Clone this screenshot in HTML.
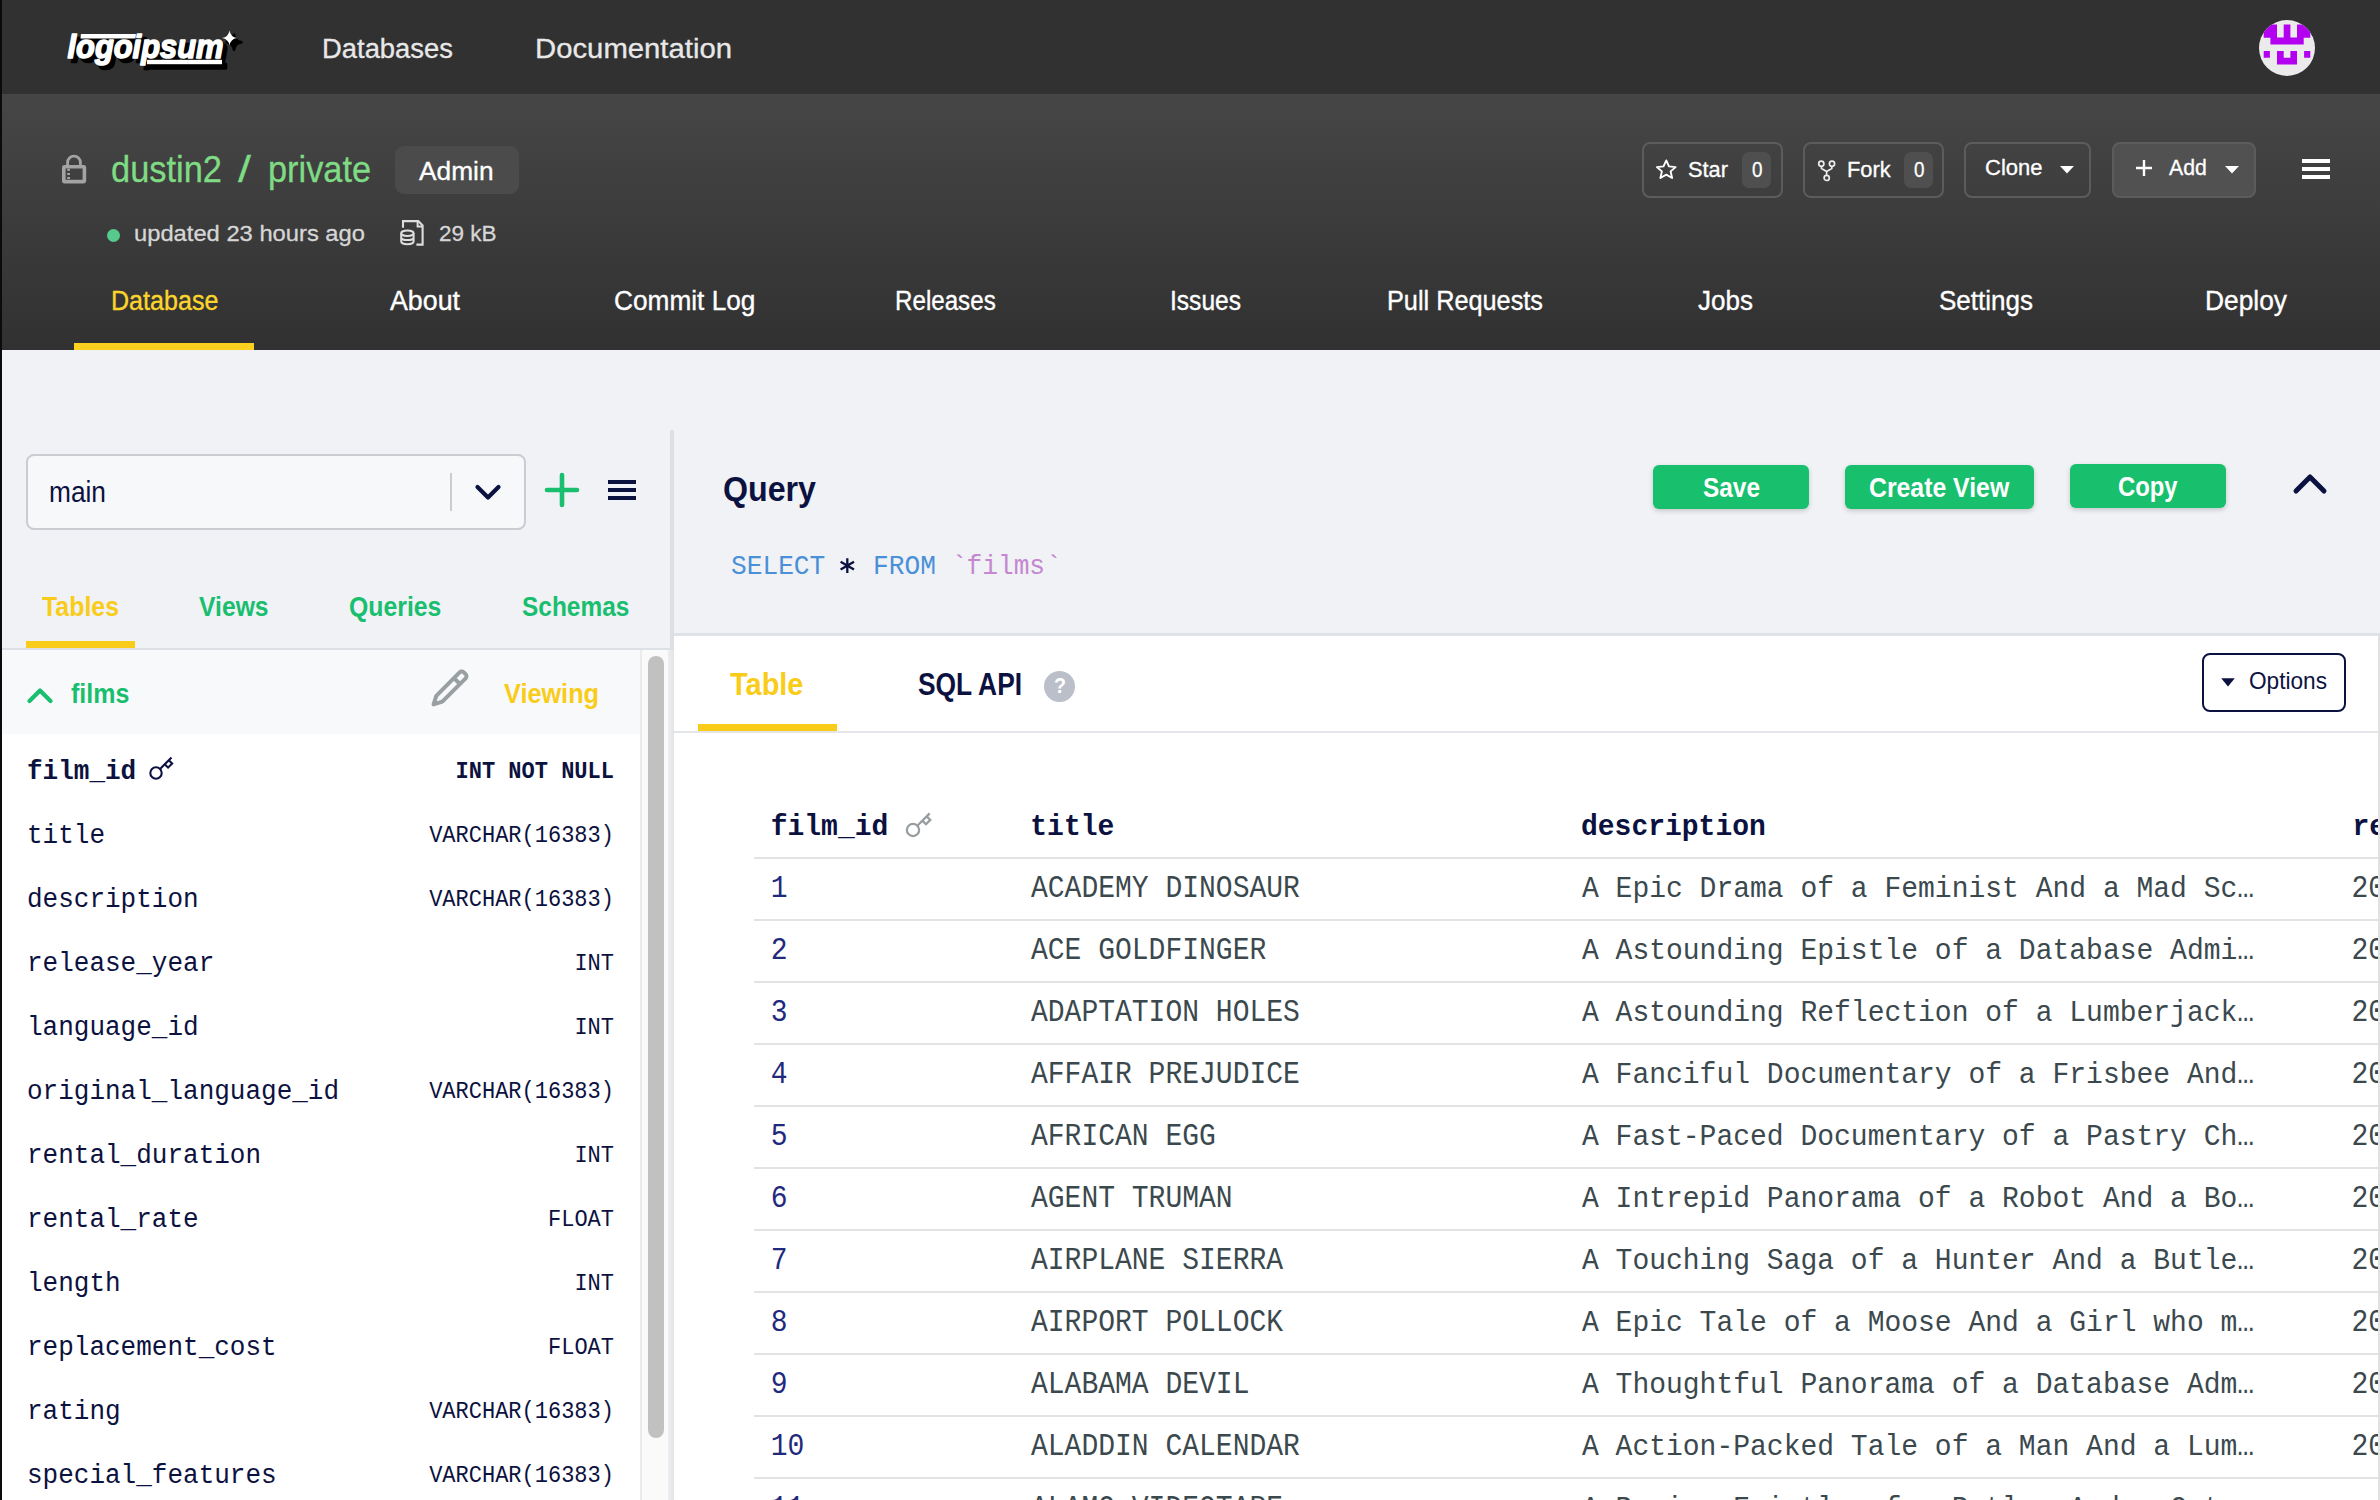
<!DOCTYPE html>
<html><head><meta charset="utf-8"><style>
html,body{margin:0;padding:0}
body{width:2380px;height:1500px;overflow:hidden;position:relative;background:#f0f2f5;font-family:"Liberation Sans",sans-serif}
.r{position:absolute}
.t{position:absolute;white-space:nowrap;line-height:1;transform-origin:0 0}
</style></head><body>
<div class="r" style="left:0px;top:0px;width:2380px;height:94px;background:#313131"></div>
<div class="r" style="left:0px;top:94px;width:2380px;height:256px;background:linear-gradient(#464646,#313131)"></div>
<div class="r" style="left:0px;top:350px;width:2380px;height:1150px;background:#f0f2f5"></div>
<svg class="r" style="left:60px;top:24px" width="190" height="50" viewBox="0 0 190 50">
<g font-family="Liberation Sans" font-weight="700" font-style="italic" font-size="33">
<g transform="translate(4,4.2)" fill="#000" stroke="#000" stroke-width="2.6" stroke-linejoin="round">
<text x="7.5" y="34" textLength="156" lengthAdjust="spacingAndGlyphs">logoipsum</text>
<rect x="22" y="10" width="55" height="4.4" transform="skewX(-6)"/>
<rect x="87" y="35.8" width="75" height="4.4"/>
<path d="M170 6.5 Q171 13 177.5 14 Q171 15 170 21.5 Q169 15 162.5 14 Q169 13 170 6.5Z"/>
</g>
<g fill="#fff" stroke="#fff" stroke-width="1.5" stroke-linejoin="round">
<text x="7.5" y="34" textLength="156" lengthAdjust="spacingAndGlyphs">logoipsum</text>
<rect x="22" y="10" width="55" height="4.4" transform="skewX(-6)" stroke="none"/>
<rect x="87" y="35.8" width="75" height="4.4" stroke="none"/>
<path d="M169.5 6.5 Q170.5 13 177 14 Q170.5 15 169.5 21.5 Q168.5 15 162 14 Q168.5 13 169.5 6.5Z" stroke="none"/>
</g>
</g></svg>
<div class="t" style="left:322.00px;top:36.14px;font-size:27px;font-family:'Liberation Sans', sans-serif;font-weight:400;color:#e8e8e8;transform:scale(1.0147,1.0000);-webkit-text-stroke:0.3px #e8e8e8">Databases</div>
<div class="t" style="left:535.00px;top:36.14px;font-size:27px;font-family:'Liberation Sans', sans-serif;font-weight:400;color:#e8e8e8;transform:scale(1.0848,1.0000);-webkit-text-stroke:0.3px #e8e8e8">Documentation</div>
<svg class="r" style="left:2259px;top:20px" width="56" height="56" viewBox="0 0 56 56">
<defs><clipPath id="cc"><circle cx="28" cy="28" r="28"/></clipPath></defs>
<circle cx="28" cy="28" r="28" fill="#ebebeb"/>
<g clip-path="url(#cc)" fill="#b400f0"><path d="M4.7 4.4 H18 V17.7 H4.7Z M24.7 4.4 H31.4 V17.7 H24.7Z M38 4.4 H51.3 V17.7 H38Z M11.4 17.6 H44.7 V24.4 H11.4Z M4.7 31 H10.9 V37.7 H4.7Z M45.1 31 H51.3 V37.7 H45.1Z M18 31 H24.7 V37.8 H31.4 V31 H38 V44.4 H18Z"/>
</g></svg>
<svg class="r" style="left:61px;top:154px" width="27" height="31" viewBox="0 0 27 31">
<path d="M6.6 12 V8.6 A6.4 6.4 0 0 1 19.4 8.6 V12" fill="none" stroke="#a3a3a3" stroke-width="2.8"/>
<rect x="2.8" y="12.8" width="20.6" height="14.8" rx="0.6" fill="none" stroke="#a3a3a3" stroke-width="3.6"/>
<rect x="6.2" y="14.8" width="2.8" height="2" fill="#a3a3a3"/><rect x="6.2" y="19" width="2.8" height="2" fill="#a3a3a3"/><rect x="6.2" y="23" width="2.8" height="2" fill="#a3a3a3"/>
</svg>
<div class="t" style="left:110.50px;top:151.52px;font-size:36px;font-family:'Liberation Sans', sans-serif;font-weight:400;color:#7fdb84;transform:scale(0.9561,1.0000);-webkit-text-stroke:0.3px #7fdb84">dustin2</div>
<div class="t" style="left:237.60px;top:152.12px;font-size:36px;font-family:'Liberation Sans', sans-serif;font-weight:400;color:#7fdb84;transform:scale(1.2935,1.0000);-webkit-text-stroke:0.3px #7fdb84">/</div>
<div class="t" style="left:267.80px;top:151.52px;font-size:36px;font-family:'Liberation Sans', sans-serif;font-weight:400;color:#7fdb84;transform:scale(0.9533,1.0000);-webkit-text-stroke:0.3px #7fdb84">private</div>
<div class="r" style="left:395px;top:146px;width:124px;height:48px;background:#4b4b4b;border-radius:9px"></div>
<div class="t" style="left:419.00px;top:159.03px;font-size:25px;font-family:'Liberation Sans', sans-serif;font-weight:400;color:#ffffff;transform:scale(1.0515,1.0000);-webkit-text-stroke:0.3px #ffffff">Admin</div>
<div class="r" style="left:106.5px;top:228.5px;width:13px;height:13px;background:#56c98d;border-radius:50%"></div>
<div class="t" style="left:133.70px;top:222.86px;font-size:22.6px;font-family:'Liberation Sans', sans-serif;font-weight:400;color:#d6d6d6;transform:scale(1.0505,1.0000);-webkit-text-stroke:0.3px #d6d6d6">updated 23 hours ago</div>
<svg class="r" style="left:399px;top:219px" width="27" height="29" viewBox="0 0 27 29">
<path d="M4 8.7 V2.1 H19.3 L23.6 6.4 V25.6 H17.4" fill="none" stroke="#dedede" stroke-width="2.1"/>
<path d="M18.6 2.1 V7.4 H23.6" fill="none" stroke="#dedede" stroke-width="2"/>
<ellipse cx="8.4" cy="14.2" rx="6.2" ry="2.7" fill="none" stroke="#dedede" stroke-width="2"/>
<path d="M2.2 14.2 V22.6 A6.2 2.7 0 0 0 14.6 22.6 V14.2 M2.2 18.4 A6.2 2.7 0 0 0 14.6 18.4" fill="none" stroke="#dedede" stroke-width="2"/>
</svg>
<div class="t" style="left:439.00px;top:222.86px;font-size:22.6px;font-family:'Liberation Sans', sans-serif;font-weight:400;color:#d6d6d6;transform:scale(0.9965,1.0000);-webkit-text-stroke:0.3px #d6d6d6">29 kB</div>
<div class="r" style="left:1642px;top:142px;width:141px;height:56px;box-sizing:border-box;border:2px solid #5c5c5c;border-radius:8px;background:transparent"></div>
<svg class="r" style="left:1654px;top:158px" width="24" height="23" viewBox="0 0 24 23">
<path d="M12.3 2.4 L15 8.4 L21.6 9.1 L16.6 13.4 L18.1 20 L12.3 16.6 L6.4 20 L7.9 13.4 L2.9 9.1 L9.5 8.4 Z" fill="none" stroke="#fff" stroke-width="1.9" stroke-linejoin="round"/>
</svg>
<div class="t" style="left:1688.00px;top:159.17px;font-size:22px;font-family:'Liberation Sans', sans-serif;font-weight:400;color:#ffffff;transform:scale(0.9913,1.0000);-webkit-text-stroke:0.3px #ffffff">Star</div>
<div class="r" style="left:1742px;top:152px;width:29px;height:36px;background:#4f4f4f;border-radius:7px"></div>
<div class="t" style="left:1751.50px;top:159.17px;font-size:22px;font-family:'Liberation Sans', sans-serif;font-weight:400;color:#ffffff;transform:scale(0.8571,1.0000);-webkit-text-stroke:0.3px #ffffff">0</div>
<div class="r" style="left:1803px;top:142px;width:141px;height:56px;box-sizing:border-box;border:2px solid #5c5c5c;border-radius:8px;background:transparent"></div>
<svg class="r" style="left:1816px;top:158px" width="22" height="25" viewBox="0 0 22 25">
<circle cx="5.3" cy="5.7" r="2.6" fill="none" stroke="#ececec" stroke-width="1.7"/>
<circle cx="16" cy="5.7" r="2.6" fill="none" stroke="#ececec" stroke-width="1.7"/>
<circle cx="10.7" cy="19.9" r="2.6" fill="none" stroke="#ececec" stroke-width="1.7"/>
<path d="M5.5 8.3 V10.6 L10.6 13.5 L15.8 10.6 V8.3 M10.6 13.5 V17.3" fill="none" stroke="#ececec" stroke-width="1.7" stroke-linejoin="round"/>
</svg>
<div class="t" style="left:1847.00px;top:159.17px;font-size:22px;font-family:'Liberation Sans', sans-serif;font-weight:400;color:#ffffff;transform:scale(0.9921,1.0000);-webkit-text-stroke:0.3px #ffffff">Fork</div>
<div class="r" style="left:1904px;top:152px;width:29px;height:36px;background:#4f4f4f;border-radius:7px"></div>
<div class="t" style="left:1913.50px;top:159.17px;font-size:22px;font-family:'Liberation Sans', sans-serif;font-weight:400;color:#ffffff;transform:scale(0.8571,1.0000);-webkit-text-stroke:0.3px #ffffff">0</div>
<div class="r" style="left:1964px;top:142px;width:127px;height:56px;box-sizing:border-box;border:2px solid #5c5c5c;border-radius:8px;background:transparent"></div>
<div class="t" style="left:1985.00px;top:157.07px;font-size:22px;font-family:'Liberation Sans', sans-serif;font-weight:400;color:#ffffff;-webkit-text-stroke:0.3px #ffffff">Clone</div>
<svg class="r" style="left:2059px;top:165px" width="16" height="9" viewBox="0 0 16 9"><path d="M1 1 H15 L8 8.5Z" fill="#fff"/></svg>
<div class="r" style="left:2112px;top:142px;width:144px;height:56px;box-sizing:border-box;border:2px solid #5c5c5c;border-radius:8px;background:#515151"></div>
<svg class="r" style="left:2135px;top:159px" width="18" height="18" viewBox="0 0 18 18"><path d="M9 1 V17 M1 9 H17" stroke="#fff" stroke-width="2.4"/></svg>
<div class="t" style="left:2168.50px;top:157.07px;font-size:22px;font-family:'Liberation Sans', sans-serif;font-weight:400;color:#ffffff;transform:scale(0.9655,1.0000);-webkit-text-stroke:0.3px #ffffff">Add</div>
<svg class="r" style="left:2224px;top:165px" width="16" height="9" viewBox="0 0 16 9"><path d="M1 1 H15 L8 8.5Z" fill="#fff"/></svg>
<div class="r" style="left:2302px;top:159px;width:28px;height:4px;background:#fff"></div>
<div class="r" style="left:2302px;top:167px;width:28px;height:4px;background:#fff"></div>
<div class="r" style="left:2302px;top:175px;width:28px;height:4px;background:#fff"></div>
<div class="t" style="left:110.60px;top:287.64px;font-size:27px;font-family:'Liberation Sans', sans-serif;font-weight:400;color:#fcd52c;transform:scale(0.9291,1.0000);-webkit-text-stroke:0.35px #fcd52c">Database</div>
<div class="t" style="left:389.50px;top:287.64px;font-size:27px;font-family:'Liberation Sans', sans-serif;font-weight:400;color:#ffffff;transform:scale(0.9922,1.0000);-webkit-text-stroke:0.35px #ffffff">About</div>
<div class="t" style="left:614.00px;top:287.64px;font-size:27px;font-family:'Liberation Sans', sans-serif;font-weight:400;color:#ffffff;transform:scale(0.9715,1.0000);-webkit-text-stroke:0.35px #ffffff">Commit Log</div>
<div class="t" style="left:894.55px;top:287.64px;font-size:27px;font-family:'Liberation Sans', sans-serif;font-weight:400;color:#ffffff;transform:scale(0.8947,1.0000);-webkit-text-stroke:0.35px #ffffff">Releases</div>
<div class="t" style="left:1169.60px;top:287.64px;font-size:27px;font-family:'Liberation Sans', sans-serif;font-weight:400;color:#ffffff;transform:scale(0.9097,1.0000);-webkit-text-stroke:0.35px #ffffff">Issues</div>
<div class="t" style="left:1387.30px;top:287.64px;font-size:27px;font-family:'Liberation Sans', sans-serif;font-weight:400;color:#ffffff;transform:scale(0.9364,1.0000);-webkit-text-stroke:0.35px #ffffff">Pull Requests</div>
<div class="t" style="left:1698.00px;top:287.64px;font-size:27px;font-family:'Liberation Sans', sans-serif;font-weight:400;color:#ffffff;transform:scale(0.9641,1.0000);-webkit-text-stroke:0.35px #ffffff">Jobs</div>
<div class="t" style="left:1938.70px;top:287.64px;font-size:27px;font-family:'Liberation Sans', sans-serif;font-weight:400;color:#ffffff;transform:scale(0.9636,1.0000);-webkit-text-stroke:0.35px #ffffff">Settings</div>
<div class="t" style="left:2204.90px;top:287.64px;font-size:27px;font-family:'Liberation Sans', sans-serif;font-weight:400;color:#ffffff;transform:scale(0.9756,1.0000);-webkit-text-stroke:0.35px #ffffff">Deploy</div>
<div class="r" style="left:74px;top:343px;width:180px;height:7px;background:#fbd01e"></div>
<div class="r" style="left:26px;top:454px;width:500px;height:76px;box-sizing:border-box;border:2px solid #c9ccd1;border-radius:8px;background:#f7f8fa"></div>
<div class="t" style="left:49.00px;top:477.22px;font-size:29.5px;font-family:'Liberation Sans', sans-serif;font-weight:400;color:#0c1240;transform:scale(0.8913,1.0000);">main</div>
<div class="r" style="left:450px;top:473px;width:2px;height:38px;background:#c9ccd1"></div>
<svg class="r" style="left:474px;top:483px" width="28" height="20" viewBox="0 0 28 20"><path d="M3.5 4 L14 14.5 L24.5 4" fill="none" stroke="#0c1240" stroke-width="4.2" stroke-linecap="round" stroke-linejoin="round"/></svg>
<svg class="r" style="left:544px;top:472px" width="36" height="36" viewBox="0 0 36 36"><path d="M18 3 V33 M3 18 H33" stroke="#19be6f" stroke-width="4.6" stroke-linecap="round"/></svg>
<div class="r" style="left:608px;top:480px;width:28px;height:4px;background:#0c1240"></div>
<div class="r" style="left:608px;top:488px;width:28px;height:4px;background:#0c1240"></div>
<div class="r" style="left:608px;top:496px;width:28px;height:4px;background:#0c1240"></div>
<div class="t" style="left:42.30px;top:592.59px;font-size:28px;font-family:'Liberation Sans', sans-serif;font-weight:700;color:#f9cc1a;transform:scale(0.8886,1.0000);">Tables</div>
<div class="t" style="left:199.00px;top:592.59px;font-size:28px;font-family:'Liberation Sans', sans-serif;font-weight:700;color:#19be6f;transform:scale(0.8821,1.0000);">Views</div>
<div class="t" style="left:349.00px;top:592.59px;font-size:28px;font-family:'Liberation Sans', sans-serif;font-weight:700;color:#19be6f;transform:scale(0.8859,1.0000);">Queries</div>
<div class="t" style="left:522.00px;top:592.59px;font-size:28px;font-family:'Liberation Sans', sans-serif;font-weight:700;color:#19be6f;transform:scale(0.8735,1.0000);">Schemas</div>
<div class="r" style="left:26px;top:641px;width:109px;height:7px;background:#f9cc1a"></div>
<div class="r" style="left:2px;top:648px;width:670px;height:2px;background:#dde0e4"></div>
<div class="r" style="left:2px;top:650px;width:638px;height:850px;background:#ffffff"></div>
<div class="r" style="left:2px;top:650px;width:638px;height:84px;background:#f8f9fb"></div>
<div class="r" style="left:640px;top:650px;width:2px;height:850px;background:#ebebeb"></div>
<div class="r" style="left:642px;top:650px;width:26px;height:850px;background:#fafafa"></div>
<div class="r" style="left:648px;top:656px;width:16px;height:782px;background:#c1c1c1;border-radius:8px"></div>
<div class="r" style="left:668px;top:650px;width:6px;height:850px;background:linear-gradient(90deg,#eceef0,#e2e5e8)"></div>
<div class="r" style="left:670px;top:430px;width:4px;height:220px;background:#dcdfe3"></div>
<svg class="r" style="left:26px;top:686px" width="28" height="20" viewBox="0 0 28 20"><path d="M3.5 15 L14 4.5 L24.5 15" fill="none" stroke="#19be6f" stroke-width="4.2" stroke-linecap="round" stroke-linejoin="round"/></svg>
<div class="t" style="left:70.60px;top:679.99px;font-size:28px;font-family:'Liberation Sans', sans-serif;font-weight:700;color:#19be6f;transform:scale(0.8936,1.0000);">films</div>
<svg class="r" style="left:426.5px;top:667px" width="44" height="44" viewBox="0 0 44 44"><path d="M6.6 37.4 L9.3 28.8 L32.6 5.4 A3 3 0 0 1 36.8 5.4 L38.6 7.2 A3 3 0 0 1 38.6 11.4 L15.3 34.7 Z M27 11.1 L32.9 17" fill="none" stroke="#99a0a1" stroke-width="4" stroke-linejoin="round"/></svg>
<div class="t" style="left:504.30px;top:680.29px;font-size:28px;font-family:'Liberation Sans', sans-serif;font-weight:700;color:#f9cc1a;transform:scale(0.9022,1.0000);">Viewing</div>
<div class="t" style="left:27.00px;top:757.69px;font-size:26px;font-family:'Liberation Mono', monospace;font-weight:700;color:#0c1240;transform:scale(1.0000,1.0500);">film_id</div>
<div class="t" style="left:455.55px;top:760.06px;font-size:22px;font-family:'Liberation Mono', monospace;font-weight:700;color:#0c1240;transform:scale(1.0000,1.1000);">INT NOT NULL</div>
<div class="t" style="left:27.00px;top:821.69px;font-size:26px;font-family:'Liberation Mono', monospace;font-weight:400;color:#0c1240;transform:scale(1.0000,1.0500);">title</div>
<div class="t" style="left:429.15px;top:824.06px;font-size:22px;font-family:'Liberation Mono', monospace;font-weight:400;color:#0c1240;transform:scale(1.0000,1.1000);">VARCHAR(16383)</div>
<div class="t" style="left:27.00px;top:885.69px;font-size:26px;font-family:'Liberation Mono', monospace;font-weight:400;color:#0c1240;transform:scale(1.0000,1.0500);">description</div>
<div class="t" style="left:429.15px;top:888.06px;font-size:22px;font-family:'Liberation Mono', monospace;font-weight:400;color:#0c1240;transform:scale(1.0000,1.1000);">VARCHAR(16383)</div>
<div class="t" style="left:27.00px;top:949.69px;font-size:26px;font-family:'Liberation Mono', monospace;font-weight:400;color:#0c1240;transform:scale(1.0000,1.0500);">release_year</div>
<div class="t" style="left:574.40px;top:952.06px;font-size:22px;font-family:'Liberation Mono', monospace;font-weight:400;color:#0c1240;transform:scale(1.0000,1.1000);">INT</div>
<div class="t" style="left:27.00px;top:1013.69px;font-size:26px;font-family:'Liberation Mono', monospace;font-weight:400;color:#0c1240;transform:scale(1.0000,1.0500);">language_id</div>
<div class="t" style="left:574.40px;top:1016.06px;font-size:22px;font-family:'Liberation Mono', monospace;font-weight:400;color:#0c1240;transform:scale(1.0000,1.1000);">INT</div>
<div class="t" style="left:27.00px;top:1077.69px;font-size:26px;font-family:'Liberation Mono', monospace;font-weight:400;color:#0c1240;transform:scale(1.0000,1.0500);">original_language_id</div>
<div class="t" style="left:429.15px;top:1080.06px;font-size:22px;font-family:'Liberation Mono', monospace;font-weight:400;color:#0c1240;transform:scale(1.0000,1.1000);">VARCHAR(16383)</div>
<div class="t" style="left:27.00px;top:1141.69px;font-size:26px;font-family:'Liberation Mono', monospace;font-weight:400;color:#0c1240;transform:scale(1.0000,1.0500);">rental_duration</div>
<div class="t" style="left:574.40px;top:1144.06px;font-size:22px;font-family:'Liberation Mono', monospace;font-weight:400;color:#0c1240;transform:scale(1.0000,1.1000);">INT</div>
<div class="t" style="left:27.00px;top:1205.69px;font-size:26px;font-family:'Liberation Mono', monospace;font-weight:400;color:#0c1240;transform:scale(1.0000,1.0500);">rental_rate</div>
<div class="t" style="left:548.00px;top:1208.06px;font-size:22px;font-family:'Liberation Mono', monospace;font-weight:400;color:#0c1240;transform:scale(1.0000,1.1000);">FLOAT</div>
<div class="t" style="left:27.00px;top:1269.69px;font-size:26px;font-family:'Liberation Mono', monospace;font-weight:400;color:#0c1240;transform:scale(1.0000,1.0500);">length</div>
<div class="t" style="left:574.40px;top:1272.06px;font-size:22px;font-family:'Liberation Mono', monospace;font-weight:400;color:#0c1240;transform:scale(1.0000,1.1000);">INT</div>
<div class="t" style="left:27.00px;top:1333.69px;font-size:26px;font-family:'Liberation Mono', monospace;font-weight:400;color:#0c1240;transform:scale(1.0000,1.0500);">replacement_cost</div>
<div class="t" style="left:548.00px;top:1336.06px;font-size:22px;font-family:'Liberation Mono', monospace;font-weight:400;color:#0c1240;transform:scale(1.0000,1.1000);">FLOAT</div>
<div class="t" style="left:27.00px;top:1397.69px;font-size:26px;font-family:'Liberation Mono', monospace;font-weight:400;color:#0c1240;transform:scale(1.0000,1.0500);">rating</div>
<div class="t" style="left:429.15px;top:1400.06px;font-size:22px;font-family:'Liberation Mono', monospace;font-weight:400;color:#0c1240;transform:scale(1.0000,1.1000);">VARCHAR(16383)</div>
<div class="t" style="left:27.00px;top:1461.69px;font-size:26px;font-family:'Liberation Mono', monospace;font-weight:400;color:#0c1240;transform:scale(1.0000,1.0500);">special_features</div>
<div class="t" style="left:429.15px;top:1464.06px;font-size:22px;font-family:'Liberation Mono', monospace;font-weight:400;color:#0c1240;transform:scale(1.0000,1.1000);">VARCHAR(16383)</div>
<svg class="r" style="left:146.0px;top:750.6px" width="32" height="32" viewBox="0 0 32 32"><g transform="translate(10,22) scale(0.95)" fill="none" stroke="#0c1240" stroke-width="2.2" stroke-linejoin="miter"><circle cx="0" cy="0" r="6"/><path d="M4.24 -4.24 L16.3 -16.3"/><path d="M9.2 -9.2 L12.7 -5.66 L17 -9.9 L13.4 -13.4"/></g></svg>
<div class="t" style="left:723.00px;top:472.29px;font-size:34.5px;font-family:'Liberation Sans', sans-serif;font-weight:700;color:#0c1240;transform:scale(0.9328,1.0000);">Query</div>
<svg class="r" style="left:838px;top:556px" width="20" height="20" viewBox="0 0 20 20"><path d="M9.3 2.3 V16.9 M2.6 5.7 L16 13.6 M2.6 13.6 L16 5.7" stroke="#0c1240" stroke-width="2.3"/></svg>
<div class="t" style="left:731.00px;top:552.12px;font-size:26.2px;font-family:'Liberation Mono', monospace;font-weight:400;color:#4a90d9;transform:scale(1.0000,1.0800);">SELECT</div>
<div class="t" style="left:873.00px;top:552.12px;font-size:26.2px;font-family:'Liberation Mono', monospace;font-weight:400;color:#4a90d9;transform:scale(1.0000,1.0800);">FROM</div>
<div class="t" style="left:951.70px;top:552.12px;font-size:26.2px;font-family:'Liberation Mono', monospace;font-weight:400;color:#c487d0;transform:scale(1.0000,1.0800);">`</div>
<div class="t" style="left:966.50px;top:552.12px;font-size:26.2px;font-family:'Liberation Mono', monospace;font-weight:400;color:#c487d0;transform:scale(1.0000,1.0800);">films</div>
<div class="t" style="left:1046.00px;top:552.12px;font-size:26.2px;font-family:'Liberation Mono', monospace;font-weight:400;color:#c487d0;transform:scale(1.0000,1.0800);">`</div>
<div class="r" style="left:1653px;top:465px;width:156px;height:44px;background:#18c06e;border-radius:6px;box-shadow:0 2px 5px rgba(0,0,0,.18)"></div>
<div class="t" style="left:1702.60px;top:473.83px;font-size:27.6px;font-family:'Liberation Sans', sans-serif;font-weight:700;color:#ffffff;transform:scale(0.8844,1.0000);">Save</div>
<div class="r" style="left:1845px;top:465px;width:189px;height:44px;background:#18c06e;border-radius:6px;box-shadow:0 2px 5px rgba(0,0,0,.18)"></div>
<div class="t" style="left:1869.40px;top:473.83px;font-size:27.6px;font-family:'Liberation Sans', sans-serif;font-weight:700;color:#ffffff;transform:scale(0.8991,1.0000);">Create View</div>
<div class="r" style="left:2070px;top:464px;width:156px;height:44px;background:#18c06e;border-radius:6px;box-shadow:0 2px 5px rgba(0,0,0,.18)"></div>
<div class="t" style="left:2117.90px;top:472.83px;font-size:27.6px;font-family:'Liberation Sans', sans-serif;font-weight:700;color:#ffffff;transform:scale(0.8638,1.0000);">Copy</div>
<svg class="r" style="left:2291px;top:471px" width="38" height="26" viewBox="0 0 38 26"><path d="M5 20 L19 6 L33 20" fill="none" stroke="#0c1240" stroke-width="5" stroke-linecap="round" stroke-linejoin="round"/></svg>
<div class="r" style="left:674px;top:633px;width:1706px;height:3px;background:#dfe2e6"></div>
<div class="r" style="left:674px;top:636px;width:1704px;height:864px;background:#ffffff"></div>
<div class="r" style="left:2378px;top:636px;width:2px;height:864px;background:#e1e1e1"></div>
<div class="t" style="left:730.40px;top:669.01px;font-size:31.4px;font-family:'Liberation Sans', sans-serif;font-weight:700;color:#f9cc1a;transform:scale(0.9222,1.0000);">Table</div>
<div class="t" style="left:917.60px;top:669.01px;font-size:31.4px;font-family:'Liberation Sans', sans-serif;font-weight:700;color:#0c1240;transform:scale(0.8402,1.0000);">SQL API</div>
<div class="r" style="left:1044px;top:671px;width:31.4px;height:31.4px;background:#bbbfca;border-radius:50%"></div>
<div class="t" style="left:1053.50px;top:675.37px;font-size:22px;font-family:'Liberation Sans', sans-serif;font-weight:700;color:#ffffff;transform:scale(0.8922,1.0000);">?</div>
<div class="r" style="left:698px;top:724px;width:139px;height:7px;background:#f9cc1a"></div>
<div class="r" style="left:674px;top:731px;width:1704px;height:2px;background:#e3e5e8"></div>
<div class="r" style="left:2202px;top:653px;width:144px;height:59px;box-sizing:border-box;border:2px solid #0c1240;border-radius:8px;background:#fff"></div>
<svg class="r" style="left:2220px;top:677px" width="16" height="11" viewBox="0 0 16 11"><path d="M1.2 1.2 H14.8 L8 9.5Z" fill="#0c1240"/></svg>
<div class="t" style="left:2249.00px;top:668.68px;font-size:24px;font-family:'Liberation Sans', sans-serif;font-weight:400;color:#0c1240;transform:scale(0.9432,1.0000);">Options</div>
<div class="t" style="left:770.70px;top:813.08px;font-size:28px;font-family:'Liberation Mono', monospace;font-weight:700;color:#0c1240;transform:scale(1.0000,1.0500);">film_id</div>
<svg class="r" style="left:902.6px;top:807.9px" width="32" height="32" viewBox="0 0 32 32"><g transform="translate(10,22) scale(1.02)" fill="none" stroke="#979da0" stroke-width="2.2" stroke-linejoin="miter"><circle cx="0" cy="0" r="6"/><path d="M4.24 -4.24 L16.3 -16.3"/><path d="M9.2 -9.2 L12.7 -5.66 L17 -9.9 L13.4 -13.4"/></g></svg>
<div class="t" style="left:1030.30px;top:813.08px;font-size:28px;font-family:'Liberation Mono', monospace;font-weight:700;color:#0c1240;transform:scale(1.0000,1.0500);">title</div>
<div class="t" style="left:1581.00px;top:813.08px;font-size:28px;font-family:'Liberation Mono', monospace;font-weight:700;color:#0c1240;transform:scale(1.0000,1.0500);">description</div>
<div class="r" style="left:2340px;top:790px;width:38px;height:700px;overflow:hidden">
<div class="t" style="left:12.50px;top:23.08px;font-size:28px;font-family:'Liberation Mono', monospace;font-weight:700;color:#0c1240;transform:scale(1.0000,1.0500);">re</div>
<div class="t" style="left:11.50px;top:84.00px;font-size:28px;font-family:'Liberation Mono', monospace;font-weight:400;color:#3b494e;transform:scale(1.0000,1.1000);">20</div>
<div class="t" style="left:11.50px;top:146.00px;font-size:28px;font-family:'Liberation Mono', monospace;font-weight:400;color:#3b494e;transform:scale(1.0000,1.1000);">20</div>
<div class="t" style="left:11.50px;top:208.00px;font-size:28px;font-family:'Liberation Mono', monospace;font-weight:400;color:#3b494e;transform:scale(1.0000,1.1000);">20</div>
<div class="t" style="left:11.50px;top:270.00px;font-size:28px;font-family:'Liberation Mono', monospace;font-weight:400;color:#3b494e;transform:scale(1.0000,1.1000);">20</div>
<div class="t" style="left:11.50px;top:332.00px;font-size:28px;font-family:'Liberation Mono', monospace;font-weight:400;color:#3b494e;transform:scale(1.0000,1.1000);">20</div>
<div class="t" style="left:11.50px;top:394.00px;font-size:28px;font-family:'Liberation Mono', monospace;font-weight:400;color:#3b494e;transform:scale(1.0000,1.1000);">20</div>
<div class="t" style="left:11.50px;top:456.00px;font-size:28px;font-family:'Liberation Mono', monospace;font-weight:400;color:#3b494e;transform:scale(1.0000,1.1000);">20</div>
<div class="t" style="left:11.50px;top:518.00px;font-size:28px;font-family:'Liberation Mono', monospace;font-weight:400;color:#3b494e;transform:scale(1.0000,1.1000);">20</div>
<div class="t" style="left:11.50px;top:580.00px;font-size:28px;font-family:'Liberation Mono', monospace;font-weight:400;color:#3b494e;transform:scale(1.0000,1.1000);">20</div>
<div class="t" style="left:11.50px;top:642.00px;font-size:28px;font-family:'Liberation Mono', monospace;font-weight:400;color:#3b494e;transform:scale(1.0000,1.1000);">20</div>
<div class="t" style="left:11.50px;top:704.00px;font-size:28px;font-family:'Liberation Mono', monospace;font-weight:400;color:#3b494e;transform:scale(1.0000,1.1000);">20</div>
</div>
<div class="r" style="left:754px;top:857px;width:1624px;height:2px;background:#e2e3e5"></div>
<div class="t" style="left:770.80px;top:874.00px;font-size:28px;font-family:'Liberation Mono', monospace;font-weight:400;color:#1f2a7c;transform:scale(1.0000,1.1000);">1</div>
<div class="t" style="left:1031.00px;top:874.00px;font-size:28px;font-family:'Liberation Mono', monospace;font-weight:400;color:#3b494e;transform:scale(1.0000,1.1000);">ACADEMY DINOSAUR</div>
<div class="t" style="left:1582.00px;top:874.65px;font-size:28px;font-family:'Liberation Mono', monospace;font-weight:400;color:#3b494e;transform:scale(1.0000,1.0700);">A Epic Drama of a Feminist And a Mad Sc…</div>
<div class="r" style="left:754px;top:919px;width:1624px;height:2px;background:#e2e3e5"></div>
<div class="t" style="left:770.80px;top:936.00px;font-size:28px;font-family:'Liberation Mono', monospace;font-weight:400;color:#1f2a7c;transform:scale(1.0000,1.1000);">2</div>
<div class="t" style="left:1031.00px;top:936.00px;font-size:28px;font-family:'Liberation Mono', monospace;font-weight:400;color:#3b494e;transform:scale(1.0000,1.1000);">ACE GOLDFINGER</div>
<div class="t" style="left:1582.00px;top:936.65px;font-size:28px;font-family:'Liberation Mono', monospace;font-weight:400;color:#3b494e;transform:scale(1.0000,1.0700);">A Astounding Epistle of a Database Admi…</div>
<div class="r" style="left:754px;top:981px;width:1624px;height:2px;background:#e2e3e5"></div>
<div class="t" style="left:770.80px;top:998.00px;font-size:28px;font-family:'Liberation Mono', monospace;font-weight:400;color:#1f2a7c;transform:scale(1.0000,1.1000);">3</div>
<div class="t" style="left:1031.00px;top:998.00px;font-size:28px;font-family:'Liberation Mono', monospace;font-weight:400;color:#3b494e;transform:scale(1.0000,1.1000);">ADAPTATION HOLES</div>
<div class="t" style="left:1582.00px;top:998.65px;font-size:28px;font-family:'Liberation Mono', monospace;font-weight:400;color:#3b494e;transform:scale(1.0000,1.0700);">A Astounding Reflection of a Lumberjack…</div>
<div class="r" style="left:754px;top:1043px;width:1624px;height:2px;background:#e2e3e5"></div>
<div class="t" style="left:770.80px;top:1060.00px;font-size:28px;font-family:'Liberation Mono', monospace;font-weight:400;color:#1f2a7c;transform:scale(1.0000,1.1000);">4</div>
<div class="t" style="left:1031.00px;top:1060.00px;font-size:28px;font-family:'Liberation Mono', monospace;font-weight:400;color:#3b494e;transform:scale(1.0000,1.1000);">AFFAIR PREJUDICE</div>
<div class="t" style="left:1582.00px;top:1060.65px;font-size:28px;font-family:'Liberation Mono', monospace;font-weight:400;color:#3b494e;transform:scale(1.0000,1.0700);">A Fanciful Documentary of a Frisbee And…</div>
<div class="r" style="left:754px;top:1105px;width:1624px;height:2px;background:#e2e3e5"></div>
<div class="t" style="left:770.80px;top:1122.00px;font-size:28px;font-family:'Liberation Mono', monospace;font-weight:400;color:#1f2a7c;transform:scale(1.0000,1.1000);">5</div>
<div class="t" style="left:1031.00px;top:1122.00px;font-size:28px;font-family:'Liberation Mono', monospace;font-weight:400;color:#3b494e;transform:scale(1.0000,1.1000);">AFRICAN EGG</div>
<div class="t" style="left:1582.00px;top:1122.65px;font-size:28px;font-family:'Liberation Mono', monospace;font-weight:400;color:#3b494e;transform:scale(1.0000,1.0700);">A Fast-Paced Documentary of a Pastry Ch…</div>
<div class="r" style="left:754px;top:1167px;width:1624px;height:2px;background:#e2e3e5"></div>
<div class="t" style="left:770.80px;top:1184.00px;font-size:28px;font-family:'Liberation Mono', monospace;font-weight:400;color:#1f2a7c;transform:scale(1.0000,1.1000);">6</div>
<div class="t" style="left:1031.00px;top:1184.00px;font-size:28px;font-family:'Liberation Mono', monospace;font-weight:400;color:#3b494e;transform:scale(1.0000,1.1000);">AGENT TRUMAN</div>
<div class="t" style="left:1582.00px;top:1184.65px;font-size:28px;font-family:'Liberation Mono', monospace;font-weight:400;color:#3b494e;transform:scale(1.0000,1.0700);">A Intrepid Panorama of a Robot And a Bo…</div>
<div class="r" style="left:754px;top:1229px;width:1624px;height:2px;background:#e2e3e5"></div>
<div class="t" style="left:770.80px;top:1246.00px;font-size:28px;font-family:'Liberation Mono', monospace;font-weight:400;color:#1f2a7c;transform:scale(1.0000,1.1000);">7</div>
<div class="t" style="left:1031.00px;top:1246.00px;font-size:28px;font-family:'Liberation Mono', monospace;font-weight:400;color:#3b494e;transform:scale(1.0000,1.1000);">AIRPLANE SIERRA</div>
<div class="t" style="left:1582.00px;top:1246.65px;font-size:28px;font-family:'Liberation Mono', monospace;font-weight:400;color:#3b494e;transform:scale(1.0000,1.0700);">A Touching Saga of a Hunter And a Butle…</div>
<div class="r" style="left:754px;top:1291px;width:1624px;height:2px;background:#e2e3e5"></div>
<div class="t" style="left:770.80px;top:1308.00px;font-size:28px;font-family:'Liberation Mono', monospace;font-weight:400;color:#1f2a7c;transform:scale(1.0000,1.1000);">8</div>
<div class="t" style="left:1031.00px;top:1308.00px;font-size:28px;font-family:'Liberation Mono', monospace;font-weight:400;color:#3b494e;transform:scale(1.0000,1.1000);">AIRPORT POLLOCK</div>
<div class="t" style="left:1582.00px;top:1308.65px;font-size:28px;font-family:'Liberation Mono', monospace;font-weight:400;color:#3b494e;transform:scale(1.0000,1.0700);">A Epic Tale of a Moose And a Girl who m…</div>
<div class="r" style="left:754px;top:1353px;width:1624px;height:2px;background:#e2e3e5"></div>
<div class="t" style="left:770.80px;top:1370.00px;font-size:28px;font-family:'Liberation Mono', monospace;font-weight:400;color:#1f2a7c;transform:scale(1.0000,1.1000);">9</div>
<div class="t" style="left:1031.00px;top:1370.00px;font-size:28px;font-family:'Liberation Mono', monospace;font-weight:400;color:#3b494e;transform:scale(1.0000,1.1000);">ALABAMA DEVIL</div>
<div class="t" style="left:1582.00px;top:1370.65px;font-size:28px;font-family:'Liberation Mono', monospace;font-weight:400;color:#3b494e;transform:scale(1.0000,1.0700);">A Thoughtful Panorama of a Database Adm…</div>
<div class="r" style="left:754px;top:1415px;width:1624px;height:2px;background:#e2e3e5"></div>
<div class="t" style="left:770.80px;top:1432.00px;font-size:28px;font-family:'Liberation Mono', monospace;font-weight:400;color:#1f2a7c;transform:scale(1.0000,1.1000);">10</div>
<div class="t" style="left:1031.00px;top:1432.00px;font-size:28px;font-family:'Liberation Mono', monospace;font-weight:400;color:#3b494e;transform:scale(1.0000,1.1000);">ALADDIN CALENDAR</div>
<div class="t" style="left:1582.00px;top:1432.65px;font-size:28px;font-family:'Liberation Mono', monospace;font-weight:400;color:#3b494e;transform:scale(1.0000,1.0700);">A Action-Packed Tale of a Man And a Lum…</div>
<div class="r" style="left:754px;top:1477px;width:1624px;height:2px;background:#e2e3e5"></div>
<div class="t" style="left:770.80px;top:1494.00px;font-size:28px;font-family:'Liberation Mono', monospace;font-weight:400;color:#1f2a7c;transform:scale(1.0000,1.1000);">11</div>
<div class="t" style="left:1031.00px;top:1494.00px;font-size:28px;font-family:'Liberation Mono', monospace;font-weight:400;color:#3b494e;transform:scale(1.0000,1.1000);">ALAMO VIDEOTAPE</div>
<div class="t" style="left:1582.00px;top:1494.65px;font-size:28px;font-family:'Liberation Mono', monospace;font-weight:400;color:#3b494e;transform:scale(1.0000,1.0700);">A Boring Epistle of a Butler And a Cat …</div>
<div class="r" style="left:754px;top:1539px;width:1624px;height:2px;background:#e2e3e5"></div>
<div class="r" style="left:0px;top:0px;width:2px;height:1500px;background:#0b0b0b"></div>
</body></html>
